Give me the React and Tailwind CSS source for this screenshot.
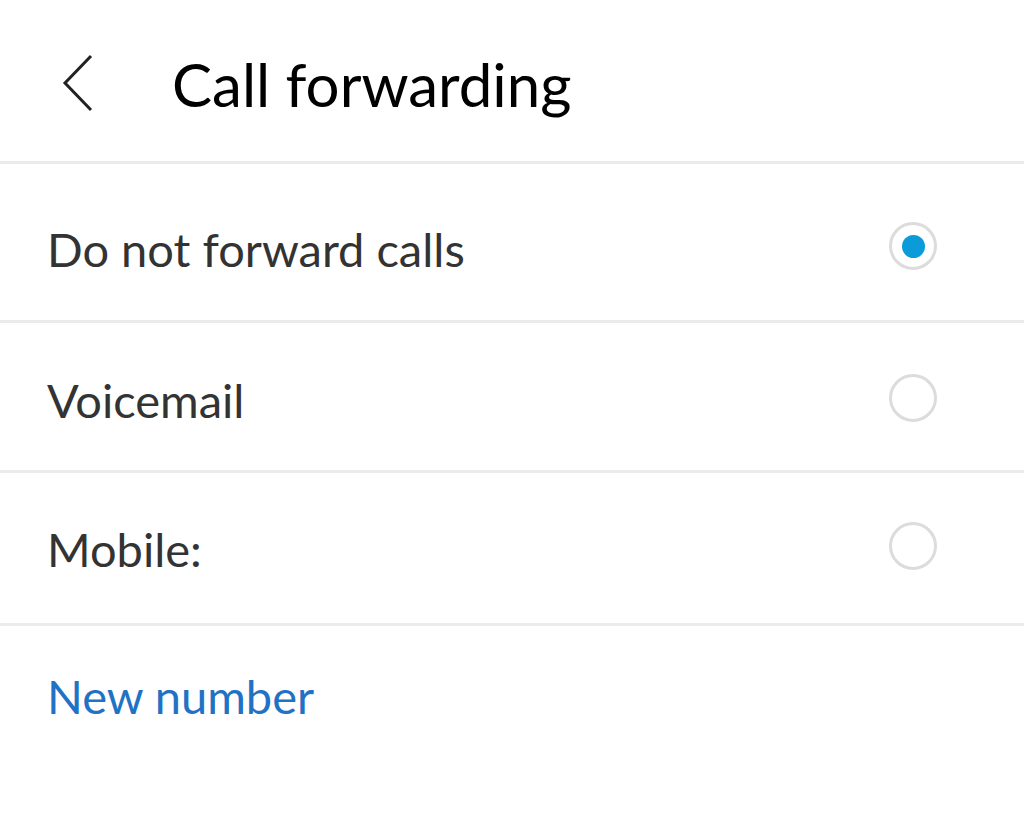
import React from 'react';

const options = [
  { label: 'Do not forward calls', h: 'h-[159px] pt-[14px]', checked: true },
  { label: 'Voicemail', h: 'h-[150px] pt-[8px]', checked: false },
  { label: 'Mobile:', h: 'h-[153px] pt-[2px]', checked: false },
];

const Radio = ({ checked }) => (
  <div className="w-[48px] h-[48px] mb-[6px] rounded-full border-[3px] border-[#dcdcdc] flex items-center justify-center">
    {checked && <div className="w-[23px] h-[23px] rounded-full bg-[#0b9bd9]" />}
  </div>
);

export default function App() {
  return (
    <div className="w-[1024px] h-[830px] bg-white font-['Lato',sans-serif] overflow-hidden">
      {/* header */}
      <div className="h-[164px] flex items-center border-b-[3px] border-[#ebebeb]">
        <div className="w-[172px] pl-[62px] pt-[4px] flex items-center">
          <svg width="32" height="58" viewBox="0 0 32 58" fill="none">
            <path d="M29 2 L3 29 L29 56" stroke="#222" strokeWidth="3" strokeLinejoin="miter" />
          </svg>
        </div>
        <h1 className="text-[60px] leading-none text-black pt-[6px]">Call forwarding</h1>
      </div>

      {options.map((o) => (
        <div
          key={o.label}
          className={`${o.h} flex items-center justify-between pl-[47px] pr-[87px] border-b-[3px] border-[#ebebeb]`}
        >
          <span className="text-[47px] leading-none text-[#333]">{o.label}</span>
          <Radio checked={o.checked} />
        </div>
      ))}

      <div className="h-[140px] flex items-center pl-[47px]">
        <span className="text-[47px] leading-none text-[#1f72c4]">New number</span>
      </div>
    </div>
  );
}
